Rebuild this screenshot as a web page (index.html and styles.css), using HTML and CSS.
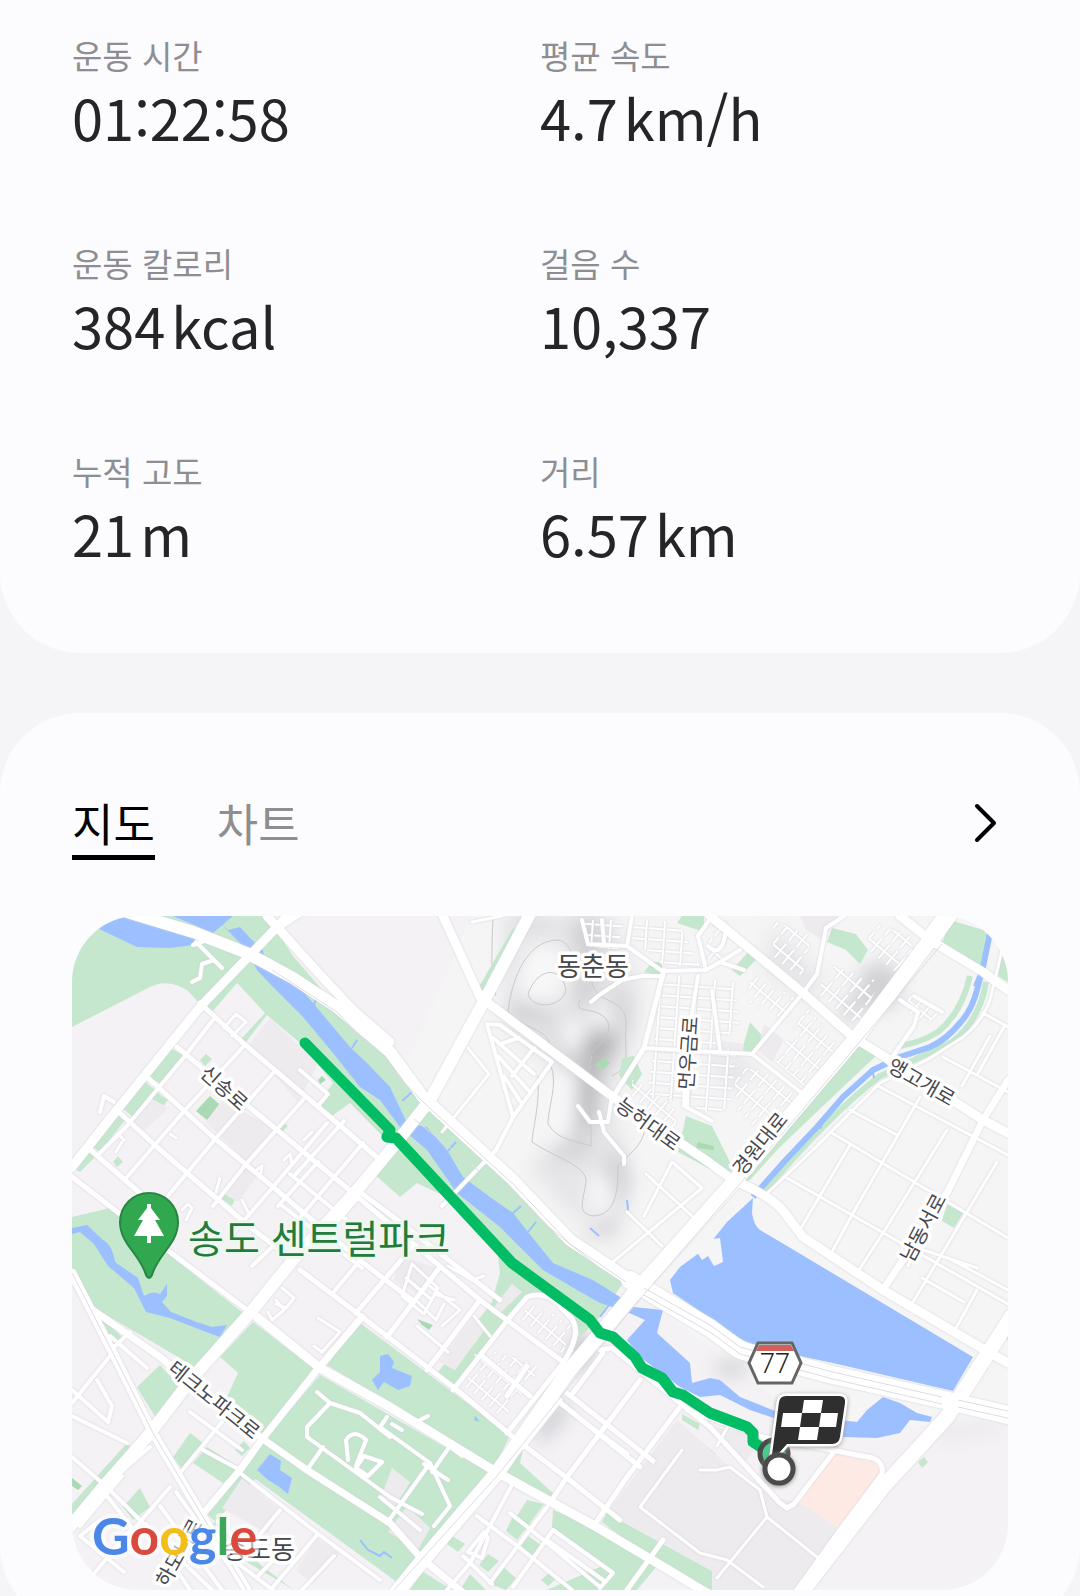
FILE: index.html
```html
<!DOCTYPE html>
<html lang="ko">
<head>
    <meta charset="utf-8">
    <meta name="viewport" content="width=device-width, initial-scale=1">
    <title>운동 기록</title>
    <link rel="stylesheet" href="styles.css">
</head>
<body>
    <dl class="card stats">
        <div class="stat">
            <dt>운동 시간</dt>
            <dd>01:22:58</dd>
        </div>
        <div class="stat">
            <dt>평균 속도</dt>
            <dd>4.7<span class="unit">km/h</span></dd>
        </div>
        <div class="stat">
            <dt>운동 칼로리</dt>
            <dd>384<span class="unit">kcal</span></dd>
        </div>
        <div class="stat">
            <dt>걸음 수</dt>
            <dd>10,337</dd>
        </div>
        <div class="stat">
            <dt>누적 고도</dt>
            <dd>21<span class="unit">m</span></dd>
        </div>
        <div class="stat">
            <dt>거리</dt>
            <dd>6.57<span class="unit">km</span></dd>
        </div>
    </dl>

    <section class="card route">
        <div class="tabs">
            <button class="tab active" type="button">지도</button>
            <button class="tab" type="button">차트</button>
            <button class="more" type="button" aria-label="더보기">
                <svg width="24" height="42" viewBox="0 0 24 42"><path d="M3 3L20 20L3 37"/></svg>
            </button>
        </div>

        <svg class="map" viewBox="0 0 936 674" role="img" aria-label="운동 경로">
            <defs>
                <pattern id="blocks" width="18" height="11" patternUnits="userSpaceOnUse" patternTransform="rotate(4)">
                    <path class="alley" d="M0 5H15M16 0V11"/>
                </pattern>
                <pattern id="blocksTilt" width="22" height="10" patternUnits="userSpaceOnUse" patternTransform="rotate(-50)">
                    <path class="alley" d="M2 5H20M11 0V10"/>
                </pattern>
                <filter id="blur" x="-50%" y="-50%" width="200%" height="200%"><feGaussianBlur stdDeviation="9"/></filter>
            </defs>

            <path class="upland" d="M400 0H936V500L760 520L700 480L498 324L330 160Z"/>

            <!-- hill shading -->
            <g class="hill" filter="url(#blur)">
                <path class="soft" d="M430 0H540L570 70L562 130L540 180L560 270L540 330L490 290L455 250L500 220L490 160L440 120L430 70Z"/>
                <path d="M438 0H478V8H438ZM496 0H532L526 60L520 96L500 88L506 50Z"/>
                <ellipse cx="455" cy="96" rx="22" ry="12"/>
                <path d="M470 100L490 106L512 150L508 208L524 236L490 244L470 238L500 222L498 160Z"/>
                <path class="deep" d="M510 122L532 112L548 128L530 152L520 210L508 216L512 160Z"/>
                <path d="M532 70L560 84L558 116L540 124L548 100Z"/>
                <path d="M545 226L560 260L544 316L500 328L548 300L532 250Z"/>
                <path class="light" d="M456 30H490L494 76L460 90L446 70ZM484 110L508 106L512 130L496 134ZM482 156H504L502 210L484 214ZM516 260L540 264V296H518ZM520 88L538 92L534 108L522 104Z"/>
                <ellipse cx="808" cy="70" rx="22" ry="24"/>
                <path d="M770 90L800 60L812 80L770 110Z"/>
                <ellipse cx="660" cy="452" rx="18" ry="8"/>
                <path class="deep" d="M506 416L520 426L508 456L498 450Z"/>
                <path d="M484 480L500 496L470 530L462 514Z"/>
                <path class="soft" d="M860 512L930 508V516L870 524ZM700 10L750 60L740 90L690 50ZM640 130L690 150L650 180Z"/>
            </g>
            <g class="contour">
                <path d="M456 78C466 50 490 50 494 74C490 92 460 94 456 78ZM421 0C420 30 418 60 424 80M436 96C440 60 456 24 486 24C500 26 500 46 520 66C524 90 556 80 554 110C552 140 560 150 540 160"/>
                <path d="M436 96C460 118 474 110 480 134C490 150 500 146 512 144C526 130 540 120 536 106C526 88 500 100 508 84M479 150C486 170 476 190 476 208C486 224 500 224 519 230C520 200 512 160 520 140"/>
                <path d="M466 160C468 190 460 216 460 226C480 240 516 250 514 266C510 290 506 296 520 300C546 300 546 270 546 250C560 234 574 230 574 200"/>
            </g>

            <g class="park">
                <path d="M0 0H195L221 40L265 91L318 141L355 184L441 264L495 317L551 367L528 401L505 424L490 447L508 418L500 396L475 380L455 381L438 401L385 471L366 456L420 386L428 357L425 331L370 279L345 267L328 281L300 256L322 232L278 187L260 200L246 188L261 167L228 127L195 99L173 127L170 122L193 97L165 67L140 96L131 91L115 74Q95 62 78 71L0 111Z"/>
                <path d="M0 301L38 292L95 337L171 397L125 454L111 444L21 391L0 354Z"/>
                <path d="M181 406L241 452L195 521L168 501L155 481L166 457L148 441Z"/>
                <path d="M288 407L438 519L423 551L255 449Z"/>
                <path d="M248 459L418 557L335 674L318 661L171 554L188 529Z"/>
                <path d="M172 554L186 560L141 608L148 630L222 674L190 650L131 594Z"/>
                <path d="M26 397L50 421L43 431ZM88 449L108 471L85 504L65 471ZM118 517L131 527L111 554L101 541ZM135 531L168 552L151 567L121 547ZM55 527L61 534L0 604V588ZM68 572L78 591L61 604L51 591ZM172 525L178 532L170 540L163 534Z"/>
                <path d="M98 132L111 139L88 167L75 161ZM71 164L83 174L61 201L50 192ZM41 197L53 204L28 236L18 229ZM13 232L23 241L8 256L0 251Z"/>
                <path d="M84 176L96 184L91 191L80 183ZM134 138L140 143L133 150L128 144ZM210 205L216 210L209 217L205 212ZM153 272L164 281L160 290L147 281ZM46 240L51 246L45 251L41 246Z"/>
                <path d="M451 534L448 547L481 577L478 582L431 554ZM481 594L521 611L585 650L565 674L475 674L530 650L480 612ZM535 597L640 655V674L600 660L530 606Z"/>
                <path d="M455 584L472 588L456 610L445 600ZM440 602L454 612L445 624L434 615ZM380 620L393 628L386 636L375 628ZM416 638L427 645L416 656L407 649ZM398 658L414 674H388ZM430 650L444 662L434 674L418 668ZM456 620L470 630L462 640L448 632ZM478 656L485 662L476 670L469 664ZM350 655L380 674H338Z"/>
                <path d="M441 12L446 17L412 75L405 74ZM785 129L805 139L771 171L708 231L678 264L668 267L695 231L721 201ZM610 0H632V16L605 7ZM590 46V60L572 56L580 46ZM614 200L640 210L661 252L655 262L606 236ZM760 12L784 18L796 34L788 48L774 34L755 26ZM678 106L694 124L680 136L670 134ZM678 34L686 42L668 60L660 54ZM550 142L562 140L570 158L560 174L547 160ZM610 498L628 508L626 514L610 504Z"/>
                <path d="M810 562L818 569L783 614L776 607ZM771 614L780 619L743 669L735 664ZM875 288L891 297L882 312L870 305ZM878 4L918 16L908 50L868 34ZM930 40L936 46V66L926 60ZM852 541L856 546L850 552L846 546ZM932 412L936 408V424L930 420Z"/>
                <path class="bank" d="M898 60Q890 96 866 116Q846 128 826 130"/>
                <path class="bank" d="M914 66Q908 104 880 126Q846 142 808 160Q760 196 688 280"/>
            </g>
            <path class="park-deep" d="M138 180L148 189L135 204L124 195ZM532 142L538 147L530 154L523 149ZM626 226L642 230V234L624 232ZM628 525L644 538L640 548L619 536ZM0 562L10 570L6 574L0 570ZM250 160L254 164L248 168L246 164ZM345 403L361 409L357 414L350 409Z"/>
            <path class="estate" d="M198 102L246 148L226 186L176 130ZM150 184L205 214L175 246L134 206ZM82 184L97 192L73 214L58 206ZM173 246L190 254L166 286L152 278ZM170 562L208 594L196 618L150 592ZM245 622L268 638L240 668L224 654ZM320 552L338 566L322 592L308 584ZM335 590L358 612L346 634L316 616ZM328 340L366 352L345 378L322 364ZM440 368L450 376L425 400L418 396ZM401 400L414 412L383 454L367 446ZM605 504L658 551L701 581L728 587L768 611L731 674H640L640 655L535 597ZM628 508L691 521L672 548ZM645 124L672 128L668 150L640 148ZM692 108L712 124L700 146L686 134ZM728 0H770L750 24L734 14Z"/>
            <path class="clinic" d="M761 537L801 546L810 557L766 612L728 586Z"/>

            <g class="water">
                <path d="M25 12Q34 2 50 0Q100 10 135 24L121 29L98 32L65 31ZM101 0H161L141 17Z"/>
                <path d="M148 7L156 14L168 11L178 22L191 34L193 50L221 64L241 87L278 131L295 147L318 171L335 207L355 211L375 234L391 261L418 281L441 297L468 331L481 347L521 364L548 381L561 391L591 394L585 417L618 447L620 467L638 462L648 464L668 481L708 497L785 506L795 494L811 481L828 487L845 497L860 501L858 506L838 504L828 517L805 522L771 521L728 511L678 494L648 479L628 481L608 471L568 441L555 424L573 404L555 396L528 387L505 374L471 354L448 331L428 311L385 277L355 234L328 211L308 184L288 171L261 137L231 101L201 71L185 54L175 34Z"/>
                <path d="M681 282L680 297Q682 310 688 314L705 324L901 441L881 475L761 447L685 431L661 419L638 402L601 377L598 364L608 351L635 331L655 306Z"/>
                <path d="M0 312L15 309L31 324Q40 328 43 346L66 362L72 380Q80 374 88 378L95 368V380L90 386L99 396L122 405L140 411L155 409L148 421L134 416L98 402L74 396L62 372L36 350L22 328L8 316L0 318Z"/>
                <path d="M308 440L316 438L322 446L320 452L340 460L338 470L326 474L312 466L306 474L300 464L308 456ZM198 538L209 545L208 554L220 562L218 570L216 578L206 570L196 564L185 554ZM403 500L408 506L402 504Z"/>
                <path class="canal" d="M918 17L911 51L905 74Q900 94 888 107Q874 124 858 131L828 141L801 154L771 181L745 211L711 247L681 281"/>
                <path class="ditch" d="M330 185L340 176M376 235L384 226M441 297L449 290M456 316L464 306M241 90L244 84M280 132L285 124M902 70L906 60M800 152L802 162M745 210L750 212M528 401L538 388M555 284L556 294M518 312L527 320M288 624L296 634L308 640L312 636L320 642"/>
            </g>
            <path class="spit" d="M632 324L648 322L651 346L642 350L636 340L630 344L625 336Z"/>

            <path class="housing" fill="url(#blocks)" d="M590 58L662 66L668 112L640 130L665 134L658 190L640 200L612 186H572L580 150ZM510 4H552L546 34L514 30ZM562 2L606 6L628 50L592 50L560 22Z"/>
            <path class="housing" fill="url(#blocksTilt)" d="M680 56L726 84L712 108L674 84ZM735 92L768 128L732 170L702 144ZM800 6L838 20L842 44L820 56L794 36ZM762 50L808 66L786 108L738 84ZM836 78L870 96L850 112L836 106ZM664 150L694 156L728 182L690 220L662 190ZM560 164L600 180L606 216L560 200ZM700 4L740 20L730 60L702 46ZM460 384L500 410L490 440L446 404ZM405 430L470 450L430 505L392 474ZM640 0L660 8L650 46L634 44Z"/>

            <g class="roads">
                <path class="w4" d="M415 108L441 201L424 234L370 290M415 108L428 109L480 146L441 201M421 122L462 158M426 140L456 174M432 160L450 188M447 122L428 128M462 132L440 160"/>
                <path class="w3" d="M396 132L417 158L370 216M572 300L600 246L630 272L536 350M574 258L620 300M590 330L555 296M402 400L418 420"/>
                <path class="w4" d="M121 29L135 24M124 26L150 52M142 44L130 48L128 62L120 66M28 196L32 180L42 186M506 190L518 206L535 206M527 196L532 216L552 240V248M519 86L526 80L550 64L570 60H590"/>
                <path class="w3" d="M152 112L164 98L174 106L160 120M110 294L116 288L120 292L114 304M144 276L148 262M182 256L190 250L188 262M232 224L240 216M212 244L218 238L220 248M98 218L104 222M48 220L52 224M44 236L50 226M170 284L176 296M340 348L366 372L352 398L330 380ZM334 362L360 384M358 370L388 394L370 410M376 350L400 364L412 360M362 378L382 384M346 386L364 404L372 388M345 410L376 436M210 372L222 382L214 392L204 388M204 384L212 394L200 404L196 396M246 402L268 416L250 436L242 430"/>
                <path class="w4" d="M141 104L113 140L55 210L28 237M171 131L113 194L55 261M201 157L145 221L95 281L70 312M231 184L175 247L141 290M255 207L201 271L161 317M291 227L215 317L180 350M272 205L222 260M300 262L262 304M246 246L206 290M284 284L244 330M300 330L260 378M228 154L256 178L246 190M208 288L290 352M218 258L292 318"/>
                <path class="w5" d="M128 87L171 127L258 201L308 244M105 131L205 214L281 277L408 384L498 451M75 161L141 221L201 271L290 346L340 384M48 197L85 231L115 257L178 311L221 344M15 231L68 277M0 261L78 321L175 394M228 354L285 397L385 474L441 521L495 562L548 604"/>
                <path class="w5" d="M438 401L381 474M408 384L355 454M368 351L315 421M341 330L284 397M455 450L435 480M410 440L458 480M438 401L455 381Q468 376 482 384L500 403Q510 418 491 447L435 517M285 274L320 300L428 384"/>
                <path class="w5" d="M531 437L501 477M568 464L495 561L478 587M608 491L555 561L521 611M451 531L488 484M485 484L568 551M495 477L581 545M520 512L555 538M528 434L540 432L608 487L638 511L708 587L715 592L722 588L761 537M615 494L691 521L801 542Q812 546 810 558L768 614L725 674M591 624L555 674"/>
                <path class="w3" d="M610 534L568 591L628 637L655 644L691 671M695 601L645 662M628 554L645 554L658 551L688 574L695 601L745 641M655 512L645 530"/>
                <path class="w4" d="M245 476L258 487L288 497L318 521M258 487L235 511V521L318 581L350 598M251 531L235 554M276 544L274 524Q282 512 294 524L284 550M284 552L296 560L310 546L292 540ZM315 501L308 511L358 547L315 607M358 547L378 590L362 610M308 581L348 614M352 548L376 564M378 530L360 556M320 508L330 514M372 526L390 540M348 504L356 500"/>
                <path class="w4" d="M441 567L398 647L375 674M475 591L418 667M438 597L468 621L528 671M481 614L541 657L528 672M481 614L441 671M475 624L531 664M405 600L448 632L500 674M396 636L412 616L416 622L410 642ZM391 640L420 668"/>
                <path class="w4" d="M0 487L38 440M25 464L40 490L36 506L0 474M0 500L55 527M0 541L35 571L88 624L140 674M98 571L38 641M78 531L31 571M108 557L150 506M104 576L175 674M88 590L150 674M74 608L118 674M50 560L8 610M35 580L60 612L20 660M168 557L245 617L308 664M245 619L201 671M208 594L175 634M131 534L168 554M118 496L170 534M38 420L75 452M41 432L58 416M28 604L8 620L52 656M186 660L215 630M230 674L262 640M148 634L222 690"/>
                <path class="w4" d="M640 75L648 134M590 55L634 54L648 46L672 54M634 54L626 20L640 0M590 55L555 30L516 28M614 130L612 190L640 205M572 132L680 138L731 178M680 138L731 77L745 58L754 12L772 0M648 46L668 34M636 30Q650 44 654 14M540 180L536 206M555 30L560 0M510 4L516 28M530 4L532 28M785 121L820 150M818 144L842 110L846 96L828 84M842 80L870 96M626 60L618 110L615 190"/>
                <path class="w5" d="M541 181L572 132L592 54"/>
                <path class="w3" d="M808 171L936 239M778 194L825 219M760 217L936 322M715 262L936 388M848 181L781 297L761 334M875 214L811 317L785 357M778 229L726 317M925 246L838 391M905 374L883 414M933 109L905 159M911 97L936 111M871 141L936 176M850 362L892 386M852 334L905 352M880 344L936 374M850 320L836 350M930 34L918 84Q910 106 891 121L855 144L808 167L741 234L691 281M918 120L890 170M930 424L912 440M400 6L430 0"/>
                <path class="w7" d="M911 204L936 164M911 204L875 277L811 374M245 454L191 522L168 554L131 598M290 401L245 454M21 394L88 441L188 521L235 554L318 607L348 641L395 680M285 274L221 344"/>
                <path class="w9" d="M371 0L408 81L541 181L638 247L661 264Q700 280 712 296L731 321L811 374L918 437L936 447M638 0L731 77L781 121L818 144L911 204L936 217M828 0L858 24L911 56L936 74M205 11L241 51L281 94L318 126M45 194L0 251M195 0L205 11L228 -4"/>
                <path class="w9" d="M221 -6L205 11L128 91L45 194L0 251M0 357L41 437L81 517L131 601L175 674M185 401L248 452L318 491L421 554L521 609L585 647L640 680"/>
                <path class="w12" d="M458 -2L411 87L358 184L321 231L285 274L221 344L178 397L121 461L75 521L31 571L-4 613M55 -4L121 16L175 37L221 62L265 91L318 136L351 181L441 264L498 324L558 364"/>
                <path class="w18" d="M558 364L591 384L638 412L668 434L761 459L881 486L940 500M878 -4L858 24"/>
                <path class="w15" d="M858 24L785 121L661 267L565 374L495 457L425 557L351 644L325 676M940 400L875 501L811 571L731 674"/>
            </g>
            <path class="rail" d="M200 54L265 96L351 186L441 268L498 328L554 366M572 372L638 409L668 431L761 456L870 481M572 379L638 416L668 438L761 463L870 488M886 484L940 496M886 491L940 503M0 357L41 437L81 517L131 601L175 674M870 28L680 254L562 390L425 560L322 674M342 203L441 282L540 362"/>

            <path class="track" d="M233 127L318 214L315 221L324 222L428 334L440 347L518 404L528 417L541 421L563 441L570 452L590 462L601 476L611 479L638 497L675 511L681 517V526L698 537"/>

            <g class="place road">
                <text transform="translate(153 171) rotate(42)">신송로</text>
                <text transform="translate(615 137) rotate(-86)">먼우금로</text>
                <text transform="translate(577 207) rotate(36)">능허대로</text>
                <text transform="translate(687 227) rotate(-51)">경원대로</text>
                <text transform="translate(850 165) rotate(30)">앵고개로</text>
                <text transform="translate(850 311) rotate(-62)">남동서로</text>
                <text transform="translate(143 483) rotate(39)">테크노파크로</text>
                <text transform="translate(106 636) rotate(-61)">하모니로</text>
            </g>
            <g class="place">
                <text x="521" y="48">동춘동</text>
                <text x="187" y="631">송도동</text>
            </g>
            <text class="landmark" x="116" y="337">송도 센트럴파크</text>

            <!-- park pin -->
            <path class="pin" d="M77 277A29 29 0 0 0 48 306C48 328 68 338 74 359Q77 365 80 359C86 338 106 328 106 306A29 29 0 0 0 77 277Z"/>
            <path class="tree" d="M75 288H79V292L88 304H83L92 320H79V327H75V320H62L71 304H66L75 292Z"/>

            <!-- highway shield -->
            <path class="shield" d="M686 427H720L729 447L720 467H686L677 447Z"/>
            <path class="shield-top" d="M687 429H719L722 435H684Z"/>
            <text class="shield-no" x="703" y="457">77</text>

            <!-- start and finish -->
            <circle class="start" cx="702" cy="538" r="14"/>
            <path class="flag-edge" d="M714 480H767Q774 480 773 487L768 521Q767 528 760 528H715L699 546L707 486Q708 480 714 480Z"/>
            <path class="flag" d="M714 480H767Q774 480 773 487L768 521Q767 528 760 528H715L699 546L707 486Q708 480 714 480Z"/>
            <path class="checks" d="M732 484H751L749 497H730ZM711 497H730L728 511H709ZM749 497H766L764 511H747ZM728 511H747L745 524H726Z"/>
            <circle class="finish" cx="707" cy="553" r="14"/>

            <text class="google" x="20" y="639"><tspan class="blue">G</tspan><tspan class="red">o</tspan><tspan class="yellow">o</tspan><tspan class="blue">g</tspan><tspan class="green">l</tspan><tspan class="red">e</tspan></text>
        </svg>
    </section>
</body>
</html>
```

FILE: styles.css
```css
* {
    box-sizing: border-box;
}

body {
    margin: 0;
    height: 100vh;
    overflow: hidden;
    background-color: #f5f5f7;
    color: #252528;
    font-family: "Noto Sans CJK KR", "Noto Sans", sans-serif;
}

.card {
    margin: 0;
    background-color: #fcfcff;
    border-radius: 80px;
}

.stats {
    display: grid;
    grid-template-columns: 1fr 1fr;
    row-gap: 84px;
    padding: 32px 72px 81px;
    border-radius: 0 0 80px 80px;
}

.stat dt {
    color: #8e8e92;
    font-size: 33px;
    line-height: 46px;
}

.stat dd {
    margin: 0;
    font-size: 56px;
    line-height: 78px;
}

.unit {
    margin-left: 6px;
}

.route {
    margin-top: 60px;
    padding: 80px 72px 36px;
}

.tabs {
    display: flex;
    align-items: flex-start;
    gap: 62px;
    margin-bottom: 56px;
}

.tabs button {
    padding: 0;
    border: none;
    background: none;
    font-family: inherit;
    cursor: pointer;
}

.tabs .tab {
    padding-bottom: 2px;
    border-bottom: 5px solid transparent;
    color: #8e8e8e;
    font-size: 45px;
    line-height: 60px;
}

.tabs .active {
    border-color: #000;
    color: #000;
}

.tabs .more {
    height: 62px;
    margin-left: auto;
    padding-right: 10px;
}

.more svg {
    display: block;
    fill: none;
    stroke: #000;
    stroke-width: 4;
    stroke-linecap: round;
    stroke-linejoin: round;
}

.map {
    display: block;
    width: 100%;
    height: auto;
    border-radius: 66px;
    background-color: #f5f2f6;
}

/* terrain */
.upland { fill: #f5f5f6; }
.hill { fill: #d2d2d5; }
.hill .soft { fill: #e6e6e8; }
.hill .deep { fill: #b2b2b5; }
.hill .light { fill: #f8f8f9; }
.contour { fill: none; stroke: #c9c8cb; stroke-width: 1; }
.park { fill: #c5e7ce; }
.park-deep { fill: #a9dab4; }
.estate { fill: #eeebef; }
.clinic { fill: #fdeae4; }
.water { fill: #9cc0ff; }
.spit { fill: #f5f5f6; }

.bank, .canal, .ditch {
    fill: none;
    stroke: #c5e7ce;
    stroke-width: 6;
}

.canal { stroke: #9cc0ff; }
.ditch { stroke: #9cc0ff; stroke-width: 2; }

/* roads */
.alley {
    fill: none;
    stroke: #fff;
    stroke-width: 2;
}

.housing,
.roads {
    filter: drop-shadow(0 0 1px #d3d0d8);
}

.roads {
    fill: none;
    stroke: #fff;
    stroke-linecap: round;
    stroke-linejoin: round;
}

.w3 { stroke-width: 3; }
.w4 { stroke-width: 4; }
.w5 { stroke-width: 5; }
.w7 { stroke-width: 7; }
.w9 { stroke-width: 9; }
.w12 { stroke-width: 12; }
.w15 { stroke-width: 15; }
.w18 { stroke-width: 18; }

.rail {
    fill: none;
    stroke: #dddce2;
    stroke-width: 1;
}

.track {
    fill: none;
    stroke: #02bd63;
    stroke-width: 11;
    stroke-linecap: round;
    stroke-linejoin: round;
}

/* labels */
.place {
    fill: #47474c;
    stroke: #fff;
    stroke-width: 7;
    stroke-linejoin: round;
    paint-order: stroke;
    font-size: 26px;
    text-anchor: middle;
    dominant-baseline: central;
}

.road {
    font-size: 20px;
}

.landmark {
    fill: #237b3c;
    stroke: #eef8f0;
    stroke-width: 6;
    stroke-linejoin: round;
    paint-order: stroke;
    font-size: 39px;
}

.pin { fill: #31a74f; stroke: #278641; stroke-width: 2; }
.tree { fill: #fff; }

.shield { fill: #fff; stroke: #656565; stroke-width: 3; }
.shield-top { fill: #d0605c; }

.shield-no {
    fill: #222;
    font-family: Roboto, sans-serif;
    font-size: 27px;
    font-weight: 300;
    text-anchor: middle;
}

.start,
.finish {
    fill: #45cf8a;
    stroke: #4b4b4b;
    stroke-width: 5;
}

.finish {
    fill: #fff;
    filter: drop-shadow(0 1px 2px #888);
}

.flag-edge { fill: #fff; stroke: #fff; stroke-width: 5; filter: drop-shadow(0 1px 2px #999); }
.flag { fill: #2f2f2f; }
.checks { fill: #fff; }

.google {
    stroke: rgba(255, 255, 255, 0.6);
    stroke-width: 8;
    stroke-linejoin: round;
    paint-order: stroke;
    font-family: Lato, sans-serif;
    font-size: 52px;
    font-weight: 700;
}

.blue { fill: #4a87e8; }
.red { fill: #da493d; }
.yellow { fill: #f4bd17; }
.green { fill: #3ba757; }
```
